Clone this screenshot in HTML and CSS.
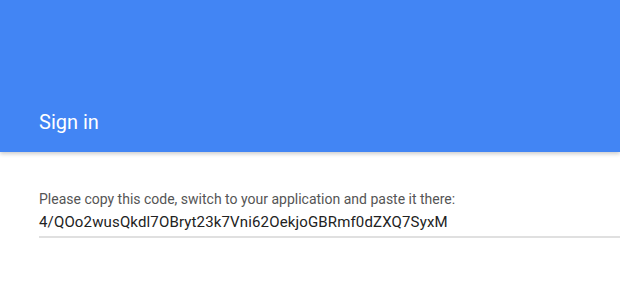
FILE: index.html
```html
<!DOCTYPE html>
<html lang="en">
<head>
    <meta charset="UTF-8">
    <meta name="viewport" content="width=device-width, initial-scale=1.0">
    <title>Sign in</title>
    <link rel="stylesheet" href="styles.css">
</head>
<body>
<div class="header">
    <h1 class="title">Sign in</h1>
</div>
<div class="content">
    <p class="label">Please copy this code, switch to your application and paste it there:</p>
    <div class="code">4/QOo2wusQkdl7OBryt23k7Vni62OekjoGBRmf0dZXQ7SyxM</div>
</div>
</body>
</html>
```

FILE: styles.css
```css
body {
    margin: 0px;
    font-family: Roboto, "Liberation Sans", sans-serif;
    background-color: #fff;
}

.header {
    background-color: rgb(66, 133, 244);
    height: 152px;
    box-shadow: 0px 2px 4px rgba(0, 0, 0, 0.2);
    display: flex;
    align-items: flex-end;
    padding: 0px 39px;
}

.title {
    color: #fff;
    font-size: 20px;
    font-weight: 400;
    margin: 0px 0px 18px 0px;
    line-height: 24px;
}

.content {
    padding: 0px 0px 0px 39px;
    margin-top: 39px;
}

.label {
    margin: 0px;
    font-size: 14px;
    line-height: 16px;
    color: #555;
}

.code {
    margin-top: 6px;
    font-size: 15px;
    line-height: 18px;
    letter-spacing: 0.15px;
    color: #222;
    padding-bottom: 5px;
    border-bottom: 2px solid #e0e0e0;
}
```
